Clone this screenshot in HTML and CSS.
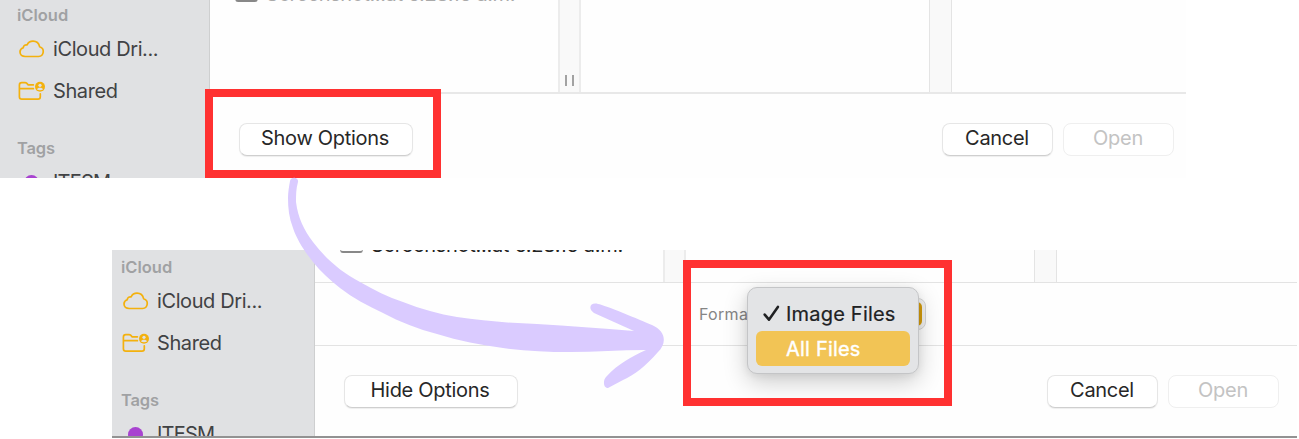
FILE: index.html
```html
<!DOCTYPE html>
<html lang="en">
<head>
<meta charset="utf-8">
<title>File dialog options</title>
<link rel="stylesheet" href="styles.css">
</head>
<body>
<svg class="defs" width="0" height="0">
  <symbol id="cloud" viewBox="0 0 26 18"><path d="M6.2 16.5H19.6A5 5 0 0 0 20.6 6.7C19.9 3.3 17.2 1.2 14 1.2C11.4 1.2 9.2 2.6 8.1 4.9C6 4.5 4.5 5.8 4.2 7.8C2.2 8.5 1 10.1 1 12.1C1 14.7 3.2 16.5 6.2 16.5Z"/></symbol>
  <symbol id="shared" viewBox="0 0 28 20"><path d="M15.4 3.8H10.2L8.6 2.2Q8 1.6 7 1.6H3.7Q1.4 1.6 1.4 4V15.8Q1.4 18.2 3.8 18.2H20Q22.3 18.2 22.3 15.8V12.8M1.6 7.7H15.4"/><circle class="solid" cx="22" cy="5.8" r="5"/><circle class="cut" cx="22" cy="4.3" r="1.6"/><path class="cut" d="M19 8.6C19.3 6.1 24.7 6.1 25 8.6Q22 10 19 8.6Z"/></symbol>
</svg>
<div class="page">
  <section class="dialog first">
    <aside class="sidebar">
      <h2 class="heading">iCloud</h2>
      <div class="item"><svg class="icon cloud"><use href="#cloud"/></svg><span class="drive">iCloud Dri...</span></div>
      <div class="item"><svg class="icon shared"><use href="#shared"/></svg><span>Shared</span></div>
      <h2 class="heading tags">Tags</h2>
      <div class="item"><i class="dot"></i><span class="tag">ITESM</span></div>
    </aside>
    <main class="main">
      <div class="columns">
        <div class="column files"><div class="file"><i class="thumb"></i><span class="filename">Screenshot...at 6.28.16 a.m.</span></div></div>
        <div class="gutter"><i class="grip"></i></div>
        <div class="column preview"></div>
        <div class="gutter second"></div>
      </div>
      <footer class="actions">
        <button class="button options">Show Options</button>
        <button class="button">Cancel</button>
        <button class="button disabled">Open</button>
      </footer>
    </main>
  </section>
  <section class="dialog expanded">
    <aside class="sidebar">
      <h2 class="heading">iCloud</h2>
      <div class="item"><svg class="icon cloud"><use href="#cloud"/></svg><span class="drive">iCloud Dri...</span></div>
      <div class="item"><svg class="icon shared"><use href="#shared"/></svg><span>Shared</span></div>
      <h2 class="heading tags">Tags</h2>
      <div class="item"><i class="dot"></i><span class="tag">ITESM</span></div>
    </aside>
    <main class="main">
      <div class="columns">
        <div class="column files"><div class="file"><i class="thumb"></i><span class="filename">Screenshot...at 6.28.16 a.m.</span></div></div>
        <div class="gutter"></div>
        <div class="column preview"></div>
        <div class="gutter second"></div>
      </div>
      <div class="format">
        <span class="format-label">Format:</span>
        <div class="popup"></div>
        <div class="menu">
          <div class="choice"><svg class="check" viewBox="0 0 16 16"><path d="M1.6 9L5.6 13.8L14 1.8"/></svg><span>Image Files</span></div>
          <div class="choice selected"><span>All Files</span></div>
        </div>
      </div>
      <footer class="actions">
        <button class="button options">Hide Options</button>
        <button class="button">Cancel</button>
        <button class="button disabled">Open</button>
      </footer>
    </main>
  </section>
  <div class="outline show-outline"></div>
  <div class="outline format-outline"></div>
  <svg class="arrow" viewBox="270 165 400 240"><path d="M290 181C291 176 299 177 298 182C296 189 296 195 296 202C298 218 304 230 313 242C326 259 341 272 360 282C374 290 388 297 403 302C421 309 439 314 457 317C483 321 510 323 537 324C569 326 601 328 634 331L594 313C587 308 591 302 598 304C605 305 640 320 652 325C666 331 667 343 658 352C646 366 634 375 623 380L608 388C603 388 603 380 606 377C619 363 631 357 646 350C620 350 595 352 570 352C547 352 525 351 503 348C481 345 459 341 437 334C418 329 400 322 383 313C368 306 353 298 340 288C330 280 321 272 313 262C305 252 297 240 293 228C289 218 288 208 288 198C288 192 289 187 290 181Z"/></svg>
</div>
</body>
</html>
```
FILE: styles.css
```css
* { box-sizing: border-box; }
body { margin: 0; background: #fff; font-family: Inter, "Liberation Sans", sans-serif; }
.defs { position: absolute; }
.page { position: relative; width: 1299px; height: 439px; overflow: hidden; }
.dialog { display: flex; overflow: hidden; background: #fefefe; }
.first { width: 1186px; height: 178px; }
.expanded { width: 1185px; height: 188px; margin: 72px 0 0 112px; border-bottom: 2px solid #929292; }
.sidebar { flex: none; width: 210px; padding: 4px 0 0 17px; background: #e0e1e3; border-right: 1px solid #cecfd0; overflow: hidden; }
.expanded .sidebar { width: 203px; padding: 6px 0 0 9px; }
.heading { margin: 0 0 2px; height: 22px; font-size: 16.5px; line-height: 22px; font-weight: 600; color: #a0a1a3; }
.tags { margin: 25px 0 2px; letter-spacing: -.2px; }
.item { display: flex; align-items: center; height: 42px; font-size: 20px; letter-spacing: -.4px; color: #414244; white-space: nowrap; }
.icon { flex: none; fill: none; stroke: #f3b10e; stroke-width: 1.7; stroke-linejoin: round; stroke-linecap: round; }
.cloud { width: 26px; height: 18px; margin: 0 8px 0 2px; }
.shared { width: 28px; height: 20px; margin: 0 7px 0 1px; }
.solid { fill: #f3b10e; stroke: none; }
.cut { fill: #e0e1e3; stroke: none; }
.dot { width: 15px; height: 15px; margin: 0 14px 0 7px; border-radius: 50%; background: #a843d0; }
.tag { letter-spacing: -.8px; }
.main { flex: 1; display: flex; flex-direction: column; min-width: 0; }
.columns { display: flex; flex: none; height: 94px; border-bottom: 2px solid #e8e8e8; overflow: hidden; }
.expanded .columns { height: 33px; border-bottom-width: 1px; border-color: #e3e3e3; }
.files { width: 348px; }
.preview { width: 348px; }
.gutter { display: flex; justify-content: center; align-items: flex-end; width: 23px; padding-bottom: 6px; background: #f9f9f9; border: solid #ececec; border-width: 0 2px; }
.second { width: 23px; border-width: 0 1px; border-color: #e4e4e4; }
.grip { width: 9px; height: 11px; border: solid #a2a2a2; border-width: 0 2px; }
.file { display: flex; align-items: center; height: 24px; margin-top: -18px; padding-left: 25px; gap: 8px; font-size: 20px; line-height: 24px; letter-spacing: -.4px; color: #aaa; white-space: nowrap; }
.expanded .file { margin-top: -17px; letter-spacing: -.3px; color: #222; }
.thumb { align-self: flex-end; width: 23px; height: 12px; margin-bottom: 4px; border: 1px solid #aaa; border-bottom: 2px solid #888; border-radius: 3px; }
.format { position: relative; flex: none; height: 63px; padding: 21px 0 0 384px; border-bottom: 1px solid #e3e3e3; }
.format-label { display: block; font-size: 16px; line-height: 20px; letter-spacing: .3px; color: #858585; }
.popup { position: absolute; left: 439px; top: 15px; width: 172px; height: 32px; border: 1px solid #d6d6d6; border-radius: 8px; background: #f1f1f1; padding: 3px; }
.popup::after { content: ""; display: block; width: 24px; height: 24px; margin-left: auto; border-radius: 5px; background: #d39b0c; }
.menu { position: absolute; z-index: 1; left: 432px; top: 4px; width: 172px; height: 87px; padding: 8px; border: 1px solid #c4c5c7; border-radius: 10px; background: #e3e4e6; box-shadow: 0 8px 24px #0003, 0 2px 9px #0001; }
.choice { display: flex; align-items: center; gap: 6px; height: 35px; padding-left: 7px; border-radius: 6px; font-size: 20px; letter-spacing: .2px; color: #202123; white-space: nowrap; -webkit-text-stroke: .2px #202123; }
.selected { padding-left: 30px; background: #f2c455; color: #fff; -webkit-text-stroke: .4px #fff; }
.check { width: 17px; height: 17px; fill: none; stroke: #202123; stroke-width: 2.4; stroke-linecap: round; stroke-linejoin: round; }
.actions { display: flex; gap: 10px; padding: 29px 12px 0 29px; }
.expanded .actions { padding: 29px 18px 0 29px; }
.button { width: 111px; height: 33px; padding: 0 1px 3px 0; border: 1px solid #e6e6e6; border-bottom-color: #cfcfcf; border-radius: 8px; background: #fff; color: #272727; font: 20px Inter, sans-serif; letter-spacing: -.3px; box-shadow: 0 1px 1px #0001; white-space: nowrap; }
.options { width: 174px; margin-right: auto; padding-right: 2px; }
.disabled { color: #c3c3c3; border-color: #efefef; box-shadow: none; }
.outline { position: absolute; z-index: 3; border: 8px solid #ff3131; }
.show-outline { left: 205px; top: 89px; width: 236px; height: 89px; }
.format-outline { left: 683px; top: 260px; width: 269px; height: 146px; }
.arrow { position: absolute; z-index: 4; left: 270px; top: 165px; width: 400px; height: 240px; fill: #dacbff; }
```
